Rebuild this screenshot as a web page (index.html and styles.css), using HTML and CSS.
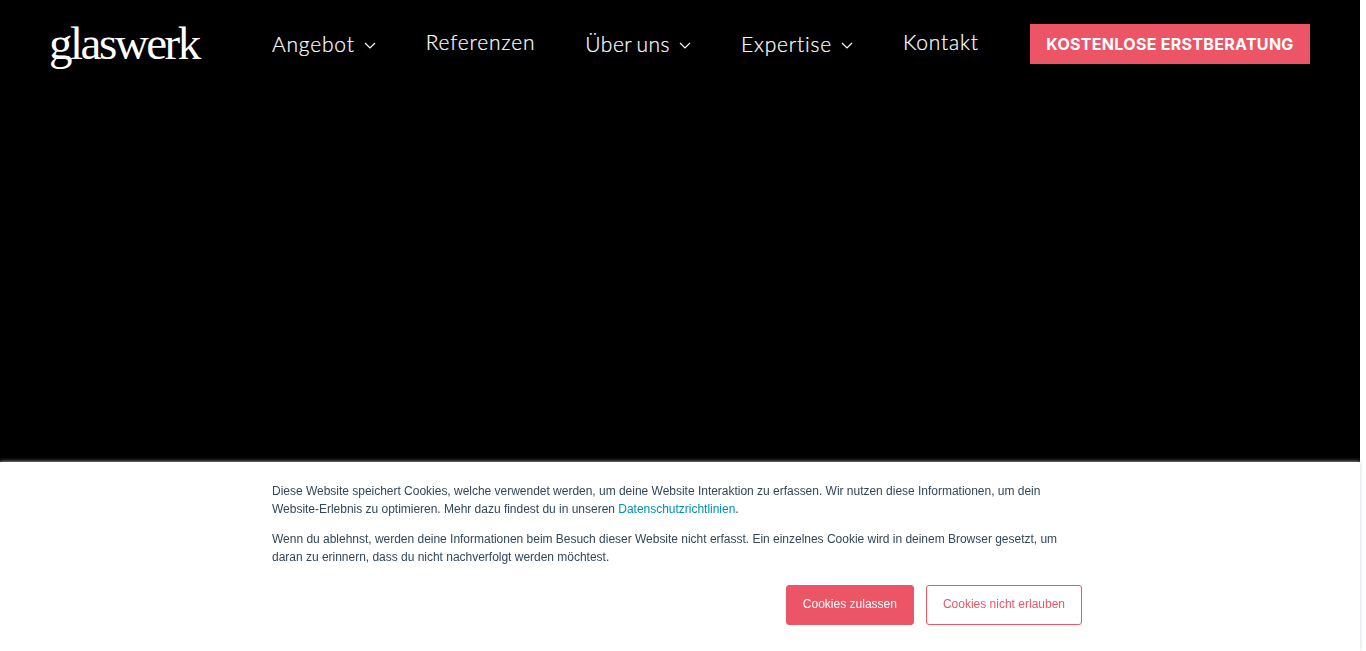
FILE: index.html
```html
<!DOCTYPE html>
<html lang="de">
<head>
    <meta charset="UTF-8">
    <meta name="viewport" content="width=device-width, initial-scale=1.0">
    <title>glaswerk</title>
    <link rel="stylesheet" href="styles.css">
</head>
<body>

    <div class="page">
        <header class="header">
            <a class="logo" href="#">glaswerk</a>
            <nav class="nav">
                <a class="nav-item has-menu" href="#">Angebot<svg class="chevron" viewBox="0 0 12 7"><path d="M1 1l5 5 5-5"/></svg></a>
                <a class="nav-item" href="#">Referenzen</a>
                <a class="nav-item has-menu nav-tight" href="#">Über uns<svg class="chevron" viewBox="0 0 12 7"><path d="M1 1l5 5 5-5"/></svg></a>
                <a class="nav-item has-menu" href="#">Expertise<svg class="chevron" viewBox="0 0 12 7"><path d="M1 1l5 5 5-5"/></svg></a>
                <a class="nav-item" href="#">Kontakt</a>
            </nav>
            <a class="cta" href="#">KOSTENLOSE ERSTBERATUNG</a>
        </header>
    </div>

    <div class="cookies">
        <div class="cookies-inner">
            <p>Diese Website speichert Cookies, welche verwendet werden, um deine Website Interaktion zu erfassen. Wir nutzen diese Informationen, um dein Website-Erlebnis zu optimieren. Mehr dazu findest du in unseren <a href="#">Datenschutzrichtlinien</a>.</p>
            <p>Wenn du ablehnst, werden deine Informationen beim Besuch dieser Website nicht erfasst. Ein einzelnes Cookie wird in deinem Browser gesetzt, um daran zu erinnern, dass du nicht nachverfolgt werden möchtest.</p>
            <div class="cookies-buttons">
                <button class="btn btn-accept">Cookies zulassen</button>
                <button class="btn btn-decline">Cookies nicht erlauben</button>
            </div>
        </div>
    </div>

</body>
</html>
```

FILE: styles.css
```css
html, body {
    margin: 0;
    padding: 0;
    height: 100%;
    background: #fff;
    overflow: hidden;
}
a {
    text-decoration: none;
}
.page {
    width: 1360px;
    height: 651px;
    background: #000;
}
.header {
    display: flex;
    align-items: flex-start;
    padding: 24px 50px 0 50px;
}
.logo {
    width: 223px;
    margin: -11px 0 0 -1px;
    font-family: "Liberation Serif", serif;
    font-size: 47px;
    line-height: 60px;
    letter-spacing: -2.5px;
    color: #fff;
}
.nav {
    display: flex;
    gap: 50px;
    width: 758px;
    font-family: Lato, sans-serif;
    font-size: 21px;
    font-weight: 300;
    line-height: 40px;
    letter-spacing: 0.8px;
    -webkit-text-stroke: 0.2px #fff;
}
.nav-item {
    color: #fff;
    margin-top: -2px;
}
.has-menu {
    margin-top: 0;
}
.nav-tight {
    letter-spacing: 0.5px;
    word-spacing: -1.5px;
}
.chevron {
    width: 12px;
    height: 7px;
    margin-left: 9px;
    vertical-align: 3px;
    fill: none;
    stroke: #fff;
    stroke-width: 1.2;
}
.cta {
    width: 280px;
    height: 40px;
    background: #ec5565;
    color: #fff;
    font-family: Inter, sans-serif;
    font-size: 16px;
    font-weight: 700;
    line-height: 40px;
    letter-spacing: 0.3px;
    text-align: center;
}
.cookies {
    position: fixed;
    left: 0;
    bottom: 0;
    width: 1360px;
    height: 189px;
    background: #fff;
    box-shadow: 0 0 4px rgba(203, 214, 226, 1);
}
.cookies-inner {
    width: 810px;
    margin-left: 272px;
    padding-top: 20px;
    font-family: "Liberation Sans", Arial, sans-serif;
    font-size: 12px;
    line-height: 18px;
    letter-spacing: -0.016px;
    color: #33475b;
}
.cookies-inner p {
    margin: 0 0 12px 0;
}
.cookies-inner a {
    color: #0091ae;
}
.cookies-buttons {
    display: flex;
    justify-content: flex-end;
    gap: 12px;
    margin-top: 19px;
}
.btn {
    height: 40px;
    padding: 0 16px 2px 16px;
    border: 1px solid #ec5565;
    border-radius: 3px;
    font-family: "Liberation Sans", Arial, sans-serif;
    font-size: 12px;
    cursor: pointer;
}
.btn-accept {
    background: #ec5565;
    color: #fff;
}
.btn-decline {
    background: #fff;
    color: #ec5565;
}
```
